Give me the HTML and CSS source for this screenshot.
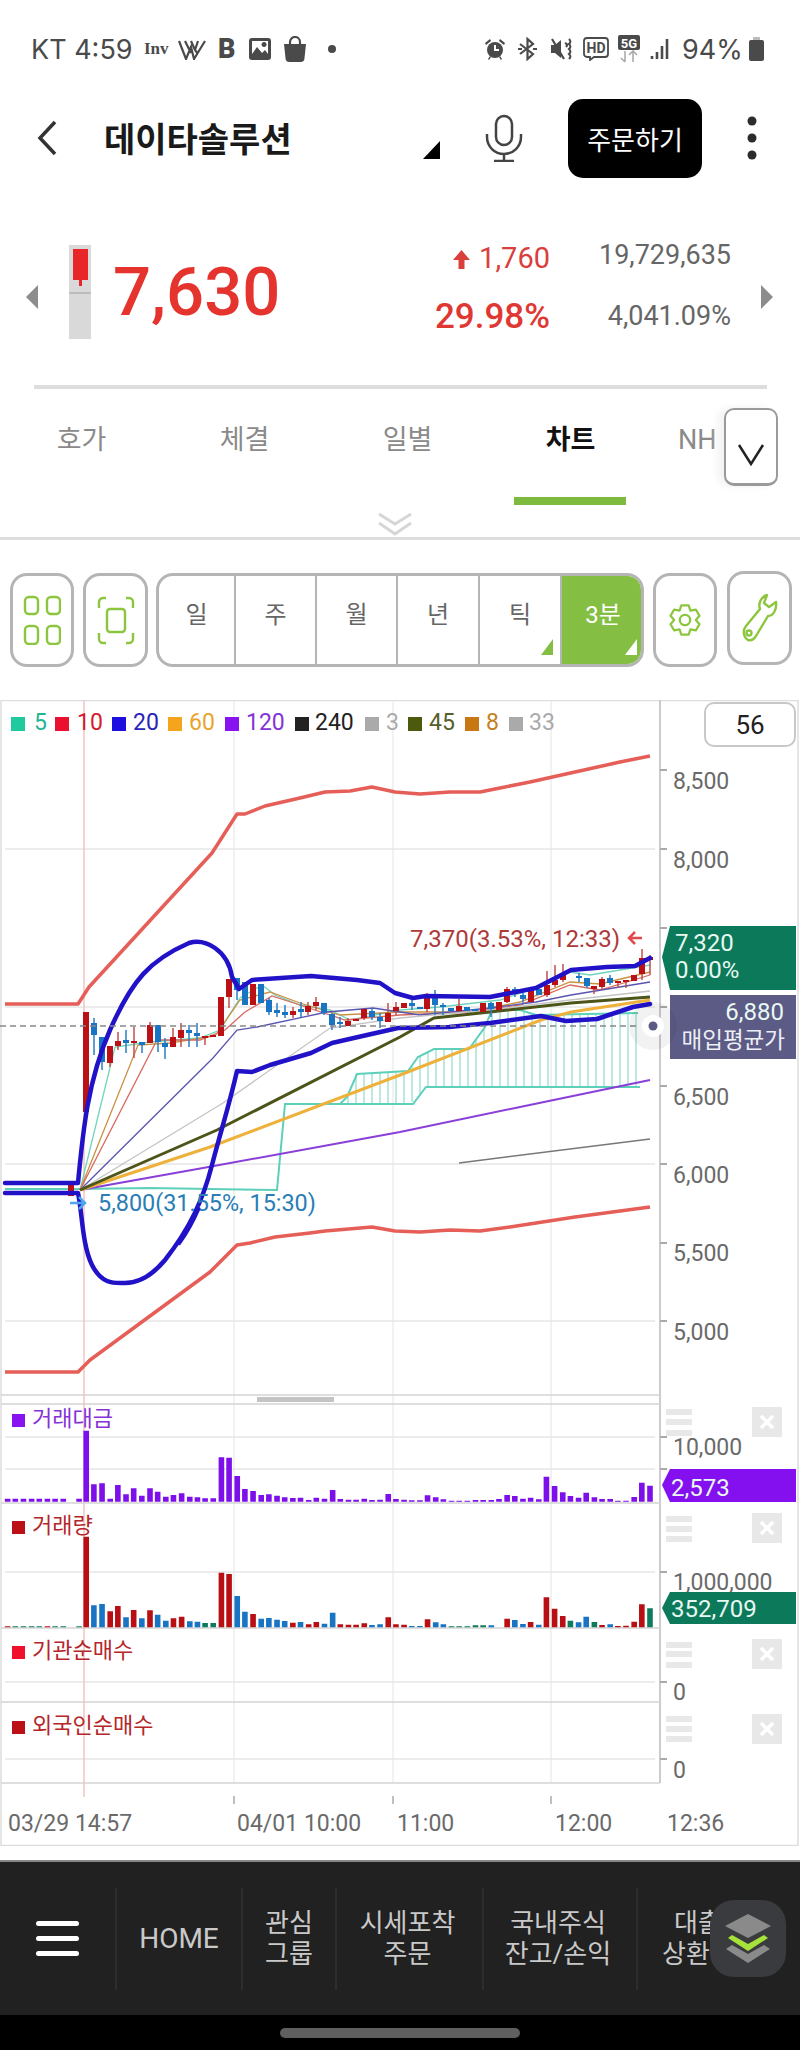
FILE: index.html
```html
<!DOCTYPE html>
<html lang="ko">
<head>
<meta charset="utf-8">
<title>데이타솔루션 차트</title>
<link rel="stylesheet" href="styles.css">
</head>
<body>
<div class="status">
  <span class="carrier">KT 4:59</span>
  <span class="st-inv">Inv</span>
  <svg class="ico st-w" width="28" height="22" viewBox="0 0 28 22"><path class="st-line" d="M1 3l7 18 5-12 3 12 11-18M7 3l6 12M13 3l4 9 3 4M20 3l-3 9"/></svg>
  <span class="st-b">B</span>
  <svg class="ico st-img" width="22" height="22" viewBox="0 0 22 22"><rect class="st-fill" width="22" height="22" rx="3"/><rect class="st-white" x="3" y="3" width="16" height="16"/><path class="st-fill" d="M3 19v-3l5-7 5 6 3-3 3 4v3zM15 4a2.500 2.500 0 1 0 .1 0z"/></svg>
  <svg class="ico st-bag" width="24" height="26" viewBox="0 0 24 26"><path class="st-fill" d="M1 8h22l-1.500 14a4 4 0 0 1-4 4H6.500a4 4 0 0 1-4-4z"/><path class="st-line" d="M7 9V6a5 5 0 0 1 10 0v3"/></svg>
  <svg class="ico st-dot" width="8" height="8" viewBox="0 0 8 8"><circle class="st-fill" cx="4" cy="4" r="4"/></svg>
  <svg class="ico st-alarm" width="20" height="22" viewBox="0 0 20 22"><circle class="st-fill" cx="10" cy="12" r="8"/><path class="st-fill" d="M0 5l5-4 1 2-5 4zM20 5l-5-4-1 2 5 4zM3 21l2-3 1 1-2 3zM17 21l-2-3-1 1 2 3z"/><path class="st-white-line" d="M10 7v5h4"/></svg>
  <svg class="ico st-bt" width="19" height="24" viewBox="0 0 19 24"><path class="st-line" d="M2 7l13 10-5.500 5V2L15 7 2 17"/><path class="st-line" d="M0 12h4M15 12h4"/></svg>
  <svg class="ico st-mute" width="21" height="24" viewBox="0 0 21 24"><path class="st-fill" d="M0 8h4l6-5v18l-6-5H0z"/><path class="st-line" d="M1 2l12 20M14 6c2 1 3 2 1 4M18 2c2 2 2 3 0 5 2 2 2 3 0 5 2 2 2 3 0 5 2 2 2 3 0 5"/></svg>
  <svg class="ico st-hd-i" width="26" height="24" viewBox="0 0 26 24"><path class="st-line-th" d="M4 1h18a3 3 0 0 1 3 3v13a3 3 0 0 1-3 3H11l-4 3v-3H4a3 3 0 0 1-3-3V4a3 3 0 0 1 3-3z"/><text class="st-hd" x="13" y="16">HD</text></svg>
  <svg class="ico st-5g-i" width="22" height="28" viewBox="0 0 22 28"><rect class="st-fill" width="22" height="15" rx="2"/><text class="st-5g" x="11" y="12.500">5G</text><path class="st-thin" d="M7 16v11M3 23l4 4M15 27V16M11 20l4-4 4 4"/></svg>
  <svg class="ico st-sig-i" width="20" height="20" viewBox="0 0 20 20"><path class="st-sig" d="M2 20v-3M7 20v-7M12 20V7M17 20V0"/></svg>
  <span class="batt-text">94%</span>
  <svg class="ico st-batt" width="15" height="24" viewBox="0 0 15 24"><path class="st-cap" d="M4 0h7v3H4z"/><rect class="st-fill" y="3" width="15" height="21" rx="2"/></svg>
</div>

<header class="header">
  <svg class="back" width="20" height="36" viewBox="0 0 20 36"><path d="M18 2L3 18l15 16"/></svg>
  <h1 class="title">데이타솔루션</h1>
  <span class="title-tri"></span>
  <svg class="mic" width="38" height="48" viewBox="0 0 38 48"><rect x="11" y="2" width="16" height="29" rx="8"/><path d="M2 20v3a17 17 0 0 0 34 0v-3M19 40v7M9 47h20"/></svg>
  <button class="order">주문하기</button>
  <svg class="more" width="10" height="44" viewBox="0 0 10 44"><circle cx="5" cy="5" r="4.500"/><circle cx="5" cy="22" r="4.500"/><circle cx="5" cy="39" r="4.500"/></svg>
</header>

<section class="quote">
  <span class="arrow-left"></span>
  <div class="mini-candle"><span class="mini-body"></span><span class="mini-wick"></span><span class="mini-base"></span></div>
  <div class="price">7,630</div>
  <div class="stats">
    <div class="chg"><svg class="up-arrow" width="19" height="20" viewBox="0 0 19 20"><path d="M9.500 1L18 11h-5.500v9h-6v-9H1z"/></svg>1,760</div>
    <div class="vol">19,729,635</div>
    <div class="pct">29.98%</div>
    <div class="vol">4,041.09%</div>
  </div>
  <span class="arrow-right"></span>
</section>
<div class="sep"></div>

<nav class="tabs">
  <div class="tab">호가</div>
  <div class="tab">체결</div>
  <div class="tab">일별</div>
  <div class="tab active">차트</div>
  <div class="tab last">NH</div>
  <div class="tabs-more"><svg width="28" height="23" viewBox="0 0 28 23"><path d="M2 2l12 19L26 2"/></svg></div>
</nav>
<div class="collapse">
  <svg width="36" height="24" viewBox="0 0 36 24"><path d="M2 2l16 10L34 2M2 11l16 11 16-11"/></svg>
</div>

<div class="toolbar">
  <button class="tool w64"><svg width="38" height="50" viewBox="0 0 38 50"><rect x="2" y="2" width="13" height="17" rx="4"/><rect x="24" y="2" width="13" height="17" rx="4"/><rect x="2" y="31" width="13" height="18" rx="4"/><rect x="24" y="31" width="13" height="18" rx="4"/></svg></button>
  <button class="tool w65"><svg width="38" height="50" viewBox="0 0 38 50"><path d="M9 3H6A4 4 0 0 0 2 7v6M29 3h3a4 4 0 0 1 4 4v6M2 38v6a4 4 0 0 0 4 4h3M36 38v6a4 4 0 0 1-4 4h-3"/><rect x="10" y="14" width="18" height="23" rx="3"/></svg></button>
  <div class="segments">
    <div class="seg s77">일</div>
    <div class="seg s81">주</div>
    <div class="seg s81">월</div>
    <div class="seg s82">년</div>
    <div class="seg s82 tick">틱</div>
    <div class="seg on tick">3분</div>
  </div>
  <button class="tool w64"><svg width="32" height="32" viewBox="0 0 34 34"><path d="M13.100 1.500H20.900L22.750 7 28.500 5.900 32.400 12.600 28.500 17 32.400 21.400 28.500 28.100 22.750 27 20.900 32.500H13.100L11.250 27 5.500 28.100 1.600 21.400 5.500 17 1.600 12.600 5.500 5.900 11.250 7Z"/><circle cx="17" cy="17" r="5.500"/></svg></button>
  <button class="tool w65 raised"><svg width="36" height="50" viewBox="0 0 36 50"><path d="M25 2C19 4 16 10 18 16L4 33C0 38 2 45 6 47 9 48 12 46 14 43L26 23C31 23 35 17 34 9L27 14 22 10Z"/><circle cx="7" cy="40" r="2.500"/></svg></button>
</div>

<div class="chart-wrap">
<svg class="chart" width="800" height="1146" viewBox="0 700 800 1146">
  <rect class="frame" x="1" y="700.500" width="797" height="1145"/>
  <path class="vgrid" d="M234 700V1783M393 700V1783M551 700V1783"/>
  <path class="hgrid" d="M5 849H655M5 1007H655M5 1164H655M5 1321H655M5 1437H655M5 1469H655M5 1572H655M5 1682H655M5 1759H655"/>
  <path class="axis" d="M660 700V1783"/>
  <path class="panel-line" d="M1 1395H660M1 1404H660M1 1503H660M1 1628H660M1 1702H660M1 1783H660"/>
  <path class="tick-mark" d="M660 770h7M660 849h7M660 928h7M660 1007h7M660 1086h7M660 1164h7M660 1243h7M660 1321h7M660 1437h7M660 1469h7M660 1572h7M660 1682h7M660 1759h7"/>
  <path class="vred" d="M84 700V1797"/>
  <path class="xtick" d="M234 1796v8M393 1796v8M551 1796v8"/>
  <rect class="scroller" x="257" y="1397" width="77" height="5"/>

  <path class="hatch" d="M348 1094V1104M356 1074V1104M364 1073V1104M372 1073V1104M380 1072V1104M388 1072V1104M396 1071V1104M404 1071V1104M412 1067V1102M420 1055V1094M428 1051V1087M436 1049V1087M444 1049V1087M452 1049V1087M460 1049V1087M468 1049V1087M476 1040V1087M484 1028V1087M492 1010V1087M500 1010V1087M508 1010V1087M516 1010V1087M524 1011V1087M532 1014V1087M540 1015V1087M548 1015V1087M556 1015V1087M564 1015V1087M572 1015V1087M580 1014V1087M588 1014V1087M596 1014V1087M604 1014V1087M612 1014V1087M620 1014V1087M628 1014V1087M636 1014V1087"/>
  <path class="span" d="M5 1189H78L150 1188 277 1190 285 1104H413L426 1087H640"/>
  <path class="span" d="M340 1104L347 1097 357 1074 408 1071 418 1057 434 1049H469L485 1027 492 1010H520L536 1015 638 1013"/>

  <path class="ma-thin teal" d="M80 1190L115 1047 150 1042 200 1038 220 1030 240 998 262 985 275 995 300 1005 330 1010 350 1020 400 1010 440 1007 500 1000 545 985 570 972 590 975 650 965"/>
  <path class="ma-thin brown" d="M80 1190L138 1045 170 1043 215 1036 240 1000 270 992 300 1003 340 1015 400 1012 470 1012 520 1002 570 982 600 984 650 972"/>
  <path class="ma-thin red" d="M80 1190L157 1040 200 1040 225 1030 245 1012 272 996 300 1005 345 1020 400 1015 470 1012 520 1005 570 985 600 990 650 975"/>
  <path class="ma-thin navy" d="M80 1190L213 1058 237 1030 257 1027 327 1012 373 1008 420 1015 490 1008 536 1002 571 995 650 982"/>
  <path class="ma-thin grey" d="M80 1190L223 1103 330 1028 400 1018 490 1010 570 1000 650 991"/>
  <path class="ma-120" d="M80 1190L203 1168 400 1132 520 1107 650 1080"/>
  <path class="ma-60" d="M80 1190L210 1147 400 1075 541 1020 571 1012 650 1000"/>
  <path class="ma-45" d="M80 1190L217 1130 400 1037 434 1018 490 1012 571 1003 650 997"/>
  <path class="ma-240" d="M459 1163L650 1139"/>

  <path class="wick-b" d="M94 1018V1055M102 1037V1070M126 1030V1053M142 1042V1053M158 1025V1052M165 1038V1059M189 1025V1047M197 1023V1047M237 978V1000M269 998V1015M277 1003V1017M285 1005V1018M301 1002V1017M324 1003V1015M332 1013V1030M340 1017V1028M372 1008V1020M380 1013V1028M412 1000V1010M435 990V1015M443 1003V1015M491 1002V1017M515 987V997M523 993V1003M579 973V982M587 978V988M610 975V985"/>
  <path class="wick-r" d="M110 1046V1067M118 1032V1050M134 1027V1058M150 1022V1043M173 1028V1047M181 1023V1047M205 1036V1045M229 979V1008M253 984V1005M293 1007V1018M308 1002V1015M316 997V1010M348 1018V1026M364 1009V1020M388 1003V1022M396 1002V1015M427 993V1012M459 999V1012M507 987V1003M547 971V997M555 965V987M563 964V982M594 986V994M602 977V990M618 981V988M626 980V988M642 949V980M650 955V975"/>
  <path class="body-r" d="M86 1012V1112M110 1046V1063M118 1041V1046M134 1041V1043M150 1025V1043M173 1037V1047M181 1030V1038M205 1036V1038M213 1035V1037M221 997V1036M229 979V997M253 984V1005M293 1011V1015M308 1006V1012M316 1002V1006M348 1021V1026M356 1019V1021M364 1009V1018M388 1013V1022M396 1007V1011M404 1003V1008M427 997V1009M459 1006V1011M483 1003V1012M499 1002V1010M507 989V1002M531 989V1002M547 985V995M555 980V985M563 975V980M594 986V989M602 979V987M618 981V983M626 980V982M634 975V981M642 958V974M650 957V960"/>
  <path class="body-b" d="M94 1023V1035M102 1037V1062M126 1040V1043M142 1042V1045M158 1025V1042M165 1043V1047M189 1030V1033M197 1033V1036M237 978V990M245 982V1005M261 984V1003M269 1000V1012M277 1010V1013M285 1012V1015M301 1009V1012M324 1003V1013M332 1014V1025M340 1022V1024M372 1011V1017M380 1017V1021M412 1003V1006M420 1007V1009M435 995V1005M443 1005V1007M451 1008V1011M467 1007V1011M475 1009V1011M491 1003V1009M515 989V994M523 995V999M539 989V995M571 969V972M579 976V978M587 978V986M610 978V983"/>
  <path class="body-r" d="M71 1184V1196"/>

  <path class="env" d="M5 1004H78L89 987 212 853 237 814 245 814 265 806 300 798 325 792 350 791 372 787 395 792 420 794 450 792 480 792 500 788 530 782 575 772 620 762 650 756"/>
  <path class="env" d="M5 1372H78L90 1360 210 1272 237 1245 250 1243 275 1237 310 1233 325 1231 372 1227 395 1231 420 1232 450 1230 480 1231 510 1227 575 1217 620 1211 650 1207"/>
  <path class="boll" d="M5 1183H78C83 1130 88 1080 110 1030S150 960 189 943C205 938 228 950 232 977L239 989 252 980 311 976 357 980 380 983 395 993 413 998 426 996 490 997 536 988 571 970 607 967 635 966 650 958"/>
  <path class="boll" d="M5 1193H78C82 1210 82 1245 92 1265S115 1283 125 1283 150 1278 165 1260C190 1228 203 1200 212 1165S228 1110 237 1071L252 1072 270 1065 311 1053 332 1043 367 1035 398 1028 449 1027 490 1023 541 1016 566 1021 597 1019 633 1007 650 1004"/>
  <path class="dash" d="M0 1026H640"/>

  <g>
    <rect class="f-teal" x="11" y="717" width="14" height="14"/><text class="lg c-teal" x="34" y="730">5</text>
    <rect class="f-red" x="55" y="717" width="14" height="14"/><text class="lg c-red" x="77" y="730">10</text>
    <rect class="f-blue" x="112" y="717" width="14" height="14"/><text class="lg c-blue" x="133" y="730">20</text>
    <rect class="f-orange" x="168" y="717" width="14" height="14"/><text class="lg c-orange" x="189" y="730">60</text>
    <rect class="f-purple" x="225" y="717" width="14" height="14"/><text class="lg c-purple" x="246" y="730">120</text>
    <rect class="f-black" x="295" y="717" width="14" height="14"/><text class="lg c-black" x="315" y="730">240</text>
    <rect class="f-grey" x="365" y="717" width="14" height="14"/><text class="lg c-grey" x="386" y="730">3</text>
    <rect class="f-olive" x="408" y="717" width="14" height="14"/><text class="lg c-olive" x="429" y="730">45</text>
    <rect class="f-brown" x="465" y="717" width="14" height="14"/><text class="lg c-brown" x="486" y="730">8</text>
    <rect class="f-grey" x="509" y="717" width="14" height="14"/><text class="lg c-grey" x="529" y="730">33</text>
  </g>
  <rect class="count-box" x="705" y="703" width="90" height="43" rx="9"/>
  <text class="count" x="750" y="734">56</text>

  <text class="yl" x="673" y="789">8,500</text>
  <text class="yl" x="673" y="868">8,000</text>
  <text class="yl" x="673" y="1105">6,500</text>
  <text class="yl" x="673" y="1183">6,000</text>
  <text class="yl" x="673" y="1261">5,500</text>
  <text class="yl" x="673" y="1340">5,000</text>
  <text class="yl" x="673" y="1455">10,000</text>
  <text class="yl" x="673" y="1590">1,000,000</text>
  <text class="yl" x="673" y="1700">0</text>
  <text class="yl" x="673" y="1778">0</text>
  <text class="yl" x="8" y="1831">03/29 14:57</text>
  <text class="yl" x="237" y="1831">04/01 10:00</text>
  <text class="yl" x="397" y="1831">11:00</text>
  <text class="yl" x="555" y="1831">12:00</text>
  <text class="yl" x="667" y="1831">12:36</text>

  <text class="note-hi" x="410" y="947">7,370(3.53%, 12:33)</text>
  <path class="note-arrow-r" d="M642 938H629M635 932l-6 6 6 6"/>
  <text class="note-lo" x="98" y="1211">5,800(31.55%, 15:30)</text>
  <path class="boll" d="M179 1243C186 1233 192 1223 198 1209"/>
  <path class="note-arrow-b" d="M70 1203H85M79 1197l6 6-6 6"/>

  <path class="b-green" d="M670 926H796V990H670L662 957z"/>
  <text class="bt" x="675" y="951">7,320</text>
  <text class="bt" x="675" y="978">0.00%</text>
  <rect class="b-slate" x="670" y="995" width="126" height="64"/>
  <text class="bt end" x="784" y="1020">6,880</text>
  <text class="bt-k end" x="785" y="1048">매입평균가</text>
  <circle class="halo" cx="653" cy="1026" r="24"/>
  <circle class="halo-in" cx="653" cy="1026" r="11"/>
  <circle class="halo-dot" cx="653" cy="1026" r="4.500"/>

  <g transform="translate(0 1390) scale(.5102 .3333)">
    <path class="bar b-pur" d="M15 335V326M30 335V326M46 335V326M62 335V326M77 335V326M93 335V326M108 335V326M124 335V326M155 335V326M169 335V122M184 335V283M200 335V280M216 335V326M231 335V285M247 335V313M262 335V295M278 335V317M294 335V295M309 335V305M325 335V320M340 335V315M356 335V310M372 335V320M387 335V322M402 335V325M418 335V325M434 335V202M449 335V203M465 335V258M480 335V297M496 335V303M512 335V315M527 335V313M543 335V317M558 335V322M574 335V324M589 335V323M605 335V330M620 335V323M636 335V326M652 335V300M667 335V327M683 335V329M698 335V329M714 335V326M729 335V330M745 335V329M761 335V312M776 335V327M792 335V329M807 335V331M823 335V331M838 335V316M854 335V322M869 335V328M885 335V332M900 335V332M916 335V332M932 335V330M947 335V330M963 335V330M978 335V327M994 335V315M1009 335V318M1025 335V326M1040 335V323M1056 335V328M1071 335V260M1087 335V288M1103 335V307M1118 335V318M1134 335V323M1149 335V308M1165 335V322M1180 335V327M1196 335V327M1211 335V332M1227 335V332M1243 335V321M1258 335V278M1274 335V287"/>
    <path class="bar b-red" d="M169 712V440M216 712V664M231 712V648M262 712V660M294 712V661M340 712V685M356 712V680M434 712V548M449 712V552M496 712V672M574 712V698M605 712V703M620 712V696M667 712V703M683 712V704M698 712V704M714 712V700M761 712V682M776 712V703M792 712V704M838 712V688M994 712V686M1040 712V696M1071 712V622M1087 712V656M1103 712V678M1180 712V705M1211 712V708M1227 712V707M1243 712V695M1258 712V643M15 712V709M93 712V709"/>
    <path class="bar b-blu" d="M184 712V646M200 712V642M247 712V682M278 712V685M309 712V674M325 712V692M372 712V694M387 712V695M465 712V618M480 712V665M512 712V686M527 712V684M543 712V689M558 712V693M589 712V696M636 712V701M652 712V668M729 712V705M745 712V703M807 712V708M823 712V708M854 712V697M869 712V703M963 712V706M1009 712V690M1025 712V702M1056 712V704M1134 712V697M1149 712V680M1196 712V703"/>
    <path class="bar b-grn" d="M30 712V709M46 712V709M62 712V709M77 712V709M108 712V709M124 712V709M155 712V709M402 712V699M418 712V699M885 712V709M900 712V709M916 712V709M932 712V706M947 712V706M1118 712V692M1165 712V696M1274 712V655"/>
  </g>
  <path class="b-pur-fill" d="M670 1469H796V1502H670L662 1485z"/>
  <text class="bt" x="671" y="1496">2,573</text>
  <path class="b-green" d="M670 1592H796V1624H670L662 1608z"/>
  <text class="bt" x="671" y="1617">352,709</text>

  <rect class="f-purple" x="12" y="1414" width="13" height="13"/><text class="pl c-purple" x="32" y="1426">거래대금</text>
  <rect class="f-dred" x="12" y="1521" width="13" height="13"/><text class="pl c-dred" x="32" y="1533">거래량</text>
  <rect class="f-red2" x="12" y="1646" width="13" height="13"/><text class="pl c-dred" x="32" y="1658">기관순매수</text>
  <rect class="f-dred" x="12" y="1721" width="13" height="13"/><text class="pl c-dred" x="32" y="1733">외국인순매수</text>

  <g class="handle">
    <rect x="666" y="1409" width="26" height="6"/><rect x="666" y="1419" width="26" height="6"/><rect x="666" y="1430" width="26" height="6"/>
    <rect x="666" y="1516" width="26" height="6"/><rect x="666" y="1526" width="26" height="6"/><rect x="666" y="1536" width="26" height="6"/>
    <rect x="666" y="1642" width="26" height="6"/><rect x="666" y="1651" width="26" height="6"/><rect x="666" y="1662" width="26" height="6"/>
    <rect x="666" y="1716" width="26" height="6"/><rect x="666" y="1726" width="26" height="6"/><rect x="666" y="1736" width="26" height="6"/>
    <rect x="752" y="1407" width="30" height="30"/><rect x="752" y="1513" width="30" height="30"/><rect x="752" y="1639" width="30" height="30"/><rect x="752" y="1714" width="30" height="30"/>
  </g>
  <path class="close-x" d="M761 1416l12 12M773 1416l-12 12M761 1522l12 12M773 1522l-12 12M761 1648l12 12M773 1648l-12 12M761 1723l12 12M773 1723l-12 12"/>
</svg>
</div>

<footer class="nav">
  <div class="nav-menu"><span></span><span></span><span></span></div>
  <div class="nav-item w-home">HOME</div>
  <div class="nav-item w-fav">관심<br>그룹</div>
  <div class="nav-item w-price">시세포착<br>주문</div>
  <div class="nav-item w-stock">국내주식<br>잔고/손익</div>
  <div class="nav-item w-loan">대출<br>상환액</div>
  <div class="fab"><svg width="48" height="52" viewBox="0 0 48 52"><path class="fab-g" d="M24 1L47 13 24 25 1 13z"/><path class="fab-g" d="M2 36l6-4 16 9 16-9 6 4-22 14z"/><path class="fab-l" d="M4 25l4-3 16 9 16-9 4 3-20 13z"/></svg></div>
</footer>
<div class="home-bar"><span></span></div>
</body>
</html>
```

FILE: styles.css
```css
* { box-sizing: border-box; }
html, body { margin: 0; padding: 0; }
body {
  width: 800px;
  height: 2050px;
  background: #fff;
  overflow: hidden;
  font-family: Roboto, "Noto Sans CJK KR", sans-serif;
  color: #333;
}

/* status bar */
.status {
  height: 98px;
  padding-left: 31px;
  display: flex;
  align-items: center;
  color: #4a4a4a;
}
.carrier { font-family: Inter, sans-serif; font-size: 27px; width: 103px; white-space: nowrap; }
.st-inv { font-family: "Liberation Serif", serif; font-size: 17px; font-weight: 700; width: 26px; margin-left: 10px; }
.st-w { margin-left: 8px; }
.st-b { font-size: 27px; font-weight: 900; width: 18px; margin-left: 12px; }
.st-img { margin-left: 13px; }
.st-bag { margin-left: 12px; }
.st-dot { margin-left: 21px; margin-right: 149px; }
.st-alarm { margin-left: 0; }
.st-bt { margin-left: 13px; }
.st-mute { margin-left: 14px; }
.st-hd-i { margin-left: 11px; }
.st-5g-i { margin-left: 9px; }
.st-sig-i { margin-left: 10px; }
.batt-text { font-family: Inter, sans-serif; font-size: 27px; width: 60px; margin-left: 12px; white-space: nowrap; }
.st-batt { margin-left: 7px; }
.ico { display: block; flex: none; }
.st-fill { fill: #4a4a4a; }
.st-cap { fill: #bbb; }
.st-white { fill: #fff; }
.st-line { fill: none; stroke: #4a4a4a; stroke-width: 2.200; }
.st-line-th { fill: none; stroke: #4a4a4a; stroke-width: 1.800; }
.st-white-line { fill: none; stroke: #fff; stroke-width: 2; }
.st-thin { fill: none; stroke: #aaa; stroke-width: 1.600; }
.st-sig { fill: none; stroke: #4a4a4a; stroke-width: 2.600; }
.st-hd { font-size: 14px; font-weight: 700; fill: #4a4a4a; text-anchor: middle; }
.st-5g { font-size: 13px; font-weight: 700; fill: #fff; text-anchor: middle; }

/* header */
.header { height: 80px; display: flex; align-items: center; padding-left: 37px; }
.back { fill: none; stroke: #333; stroke-width: 3.500; flex: none; }
.title {
  margin: 0 0 0 47px;
  width: 319px;
  font-size: 34px;
  line-height: 44px;
  font-weight: 700;
  color: #1a1a1a;
  padding-top: 4px;
}
.title-tri {
  width: 17px;
  height: 18px;
  margin-top: 24px;
  background: #000;
  clip-path: polygon(100% 0, 100% 100%, 0 100%);
  flex: none;
}
.mic { margin-left: 45px; fill: none; stroke: #444; stroke-width: 2.500; flex: none; }
.order {
  margin-left: 45px;
  width: 134px;
  height: 79px;
  border: 0;
  border-radius: 15px;
  background: #000;
  color: #fff;
  font-family: inherit;
  font-size: 26px;
  padding: 0;
}
.more { margin-left: 45px; fill: #2b2b2b; flex: none; }

/* quote */
.quote {
  height: 94px;
  margin-top: 67px;
  margin-bottom: 46px;
  padding-left: 26px;
  display: flex;
  align-items: center;
}
.arrow-left, .arrow-right { width: 12px; height: 24px; background: #8c8c8c; flex: none; }
.arrow-left { clip-path: polygon(100% 0, 100% 100%, 0 50%); margin-top: 10px; }
.arrow-right { clip-path: polygon(0 0, 100% 50%, 0 100%); margin-left: 30px; margin-top: 10px; }
.mini-candle {
  position: relative;
  width: 22px;
  height: 94px;
  margin-left: 31px;
  background: #d9d9d9;
  flex: none;
}
.mini-body { position: absolute; left: 4px; top: 4px; width: 15px; height: 31px; background: #e8262a; }
.mini-wick { position: absolute; left: 10px; top: 35px; width: 3px; height: 6px; background: #e8262a; }
.mini-base { position: absolute; left: 0; top: 47px; width: 22px; height: 2px; background: #bbb; }
.price {
  margin-left: 22px;
  width: 321px;
  font-size: 67px;
  line-height: 90px;
  font-weight: 500;
  color: #e5332e;
}
.stats {
  display: grid;
  grid-template-columns: 116px 181px;
  grid-template-rows: 47px 47px;
  row-gap: 14px;
  text-align: right;
  margin-top: -13px;
}
.chg { font-size: 29px; line-height: 47px; margin-top: 3px; color: #d9403c; white-space: nowrap; }
.up-arrow { fill: #d9403c; margin-right: 8px; vertical-align: -1px; }
.pct { font-size: 35px; line-height: 47px; font-weight: 500; color: #df3833; white-space: nowrap; }
.vol { font-size: 27px; line-height: 47px; color: #666; white-space: nowrap; }
.sep { height: 4px; margin: 0 33px 0 34px; background: #ddd; }

/* tabs */
.tabs {
  position: relative;
  height: 116px;
  display: grid;
  grid-template-columns: repeat(4, 163px) 148px;
  overflow: hidden;
}
.tab {
  position: relative;
  padding-top: 32px;
  text-align: center;
  font-size: 27px;
  line-height: 38px;
  color: #8a8a8a;
}
.tab.last { text-align: left; padding-left: 26px; }
.tab.active { color: #111; font-weight: 700; }
.tab.active::after {
  content: "";
  position: absolute;
  left: 25px;
  right: 26px;
  bottom: 0;
  height: 8px;
  background: #7dbb3f;
}
.tabs-more {
  position: absolute;
  top: 19px;
  left: 724px;
  width: 54px;
  height: 78px;
  border: 2px solid #9a9a9a;
  border-bottom-width: 3px;
  border-radius: 10px;
  background: #fff;
  box-shadow: -6px 0 8px #f2f2f2;
  display: flex;
  align-items: center;
  justify-content: center;
  padding-top: 16px;
}
.tabs-more svg { fill: none; stroke: #222; stroke-width: 2.500; }

.collapse {
  height: 35px;
  border-bottom: 3px solid #ddd;
  padding-top: 7px;
  padding-right: 11px;
  display: flex;
  justify-content: center;
}
.collapse svg { fill: none; stroke: #d6d6d6; stroke-width: 3; }

/* toolbar */
.toolbar {
  height: 160px;
  padding: 33px 0 0 10px;
  display: flex;
  align-items: flex-start;
  gap: 9px;
}
.tool {
  height: 94px;
  padding: 0;
  background: #fff;
  border: 3px solid #b5b5b5;
  border-radius: 17px;
  display: flex;
  align-items: center;
  justify-content: center;
}
.w64 { width: 64px; }
.w65 { width: 65px; }
.raised { margin-top: -2px; margin-left: 1px; }
.tool svg { fill: none; stroke: #8cc63f; stroke-width: 2.400; stroke-linejoin: round; }
.segments {
  width: 488px;
  height: 94px;
  margin-left: -1px;
  display: flex;
  border: 3px solid #b5b5b5;
  border-radius: 17px;
  overflow: hidden;
}
.seg {
  position: relative;
  flex: none;
  border-right: 2px solid #b5b5b5;
  padding-top: 22px;
  text-align: center;
  font-size: 24px;
  line-height: 34px;
  color: #666;
}
.s77 { width: 77px; }
.s81 { width: 81px; }
.s82 { width: 82px; }
.seg.on {
  flex: 1 1 0;
  background: #84bf44;
  color: #fff;
  border-right: 0;
  margin: -3px -3px -3px 0;
  padding-top: 25px;
}
.seg.tick::after {
  content: "";
  position: absolute;
  right: 7px;
  bottom: 9px;
  width: 12px;
  height: 16px;
  background: #84bf44;
  clip-path: polygon(100% 0, 100% 100%, 0 100%);
}
.seg.on.tick::after { background: #fff; bottom: 12px; }

/* chart */
.chart-wrap { height: 1146px; }
.chart { display: block; }
.frame { fill: none; stroke: #ddd; stroke-width: 1.500; }
.vgrid { stroke: #e4e4e4; stroke-width: 1; fill: none; }
.hgrid { stroke: #e6e6e6; stroke-width: 1.500; fill: none; }
.axis { stroke: #ccc; stroke-width: 2; fill: none; }
.panel-line { stroke: #d4d4d4; stroke-width: 1.500; fill: none; }
.tick-mark { stroke: #aaa; stroke-width: 2; fill: none; }
.vred { stroke: #f1c4c2; stroke-width: 1.500; fill: none; }
.xtick { stroke: #aaa; stroke-width: 1.500; fill: none; }
.scroller { fill: #c4c4c4; }

.hatch { stroke: #a8e2d6; stroke-width: 1.500; fill: none; }
.span { stroke: #5ed0ba; stroke-width: 2; fill: none; }
.ma-thin { fill: none; stroke-width: 1.300; }
.teal { stroke: #6fd4bd; }
.brown { stroke: #c9913f; }
.red { stroke: #d96a5f; }
.navy { stroke: #5a55b0; }
.grey { stroke: #c4c4c4; }
.ma-120 { fill: none; stroke: #8b3fd9; stroke-width: 2; }
.ma-60 { fill: none; stroke: #eeb13b; stroke-width: 3; }
.ma-45 { fill: none; stroke: #4d5419; stroke-width: 3; }
.ma-240 { fill: none; stroke: #777; stroke-width: 1.500; }

.wick-b { stroke: #2b7fc4; stroke-width: 1.500; fill: none; }
.wick-r { stroke: #c0504d; stroke-width: 1.500; fill: none; }
.body-r { stroke: #bb1016; stroke-width: 6; fill: none; }
.body-b { stroke: #1a74c4; stroke-width: 6; fill: none; }
.env { fill: none; stroke: #e55e58; stroke-width: 3.500; stroke-linejoin: round; }
.boll { fill: none; stroke: #2112c8; stroke-width: 4.500; stroke-linejoin: round; stroke-linecap: round; }
.dash { stroke: #888; stroke-width: 1.500; stroke-dasharray: 6 4; fill: none; }

.lg { font-size: 23px; }
.f-teal { fill: #1fca9e; } .c-teal { fill: #1fb595; }
.f-red { fill: #ec1030; } .c-red { fill: #d41b2d; }
.f-blue { fill: #1c0fe0; } .c-blue { fill: #2a22b8; }
.f-orange { fill: #f5a51d; } .c-orange { fill: #e8a52e; }
.f-purple { fill: #8714f0; } .c-purple { fill: #8533d6; }
.f-black { fill: #222; } .c-black { fill: #222; }
.f-grey { fill: #aaa; } .c-grey { fill: #aaa; }
.f-olive { fill: #4c5a0e; } .c-olive { fill: #55602a; }
.f-brown { fill: #c87812; } .c-brown { fill: #c4821f; }
.f-dred { fill: #bb1016; } .c-dred { fill: #b5262a; }
.f-red2 { fill: #f0102c; }

.count-box { fill: #fff; stroke: #c8c8c8; stroke-width: 2; }
.count { font-size: 26px; fill: #222; text-anchor: middle; }
.yl { font-size: 23px; fill: #6a6a6a; }
.note-hi { font-size: 24px; fill: #ad3a3a; }
.note-lo { font-size: 23.400px; fill: #2a7db5; }
.note-arrow-r { fill: none; stroke: #e04a4a; stroke-width: 2.500; }
.note-arrow-b { fill: none; stroke: #4da6ee; stroke-width: 2.500; }

.b-green { fill: #0c7a5a; }
.b-slate { fill: #5b5b86; }
.b-pur-fill { fill: #8510ef; }
.bt { font-size: 24px; fill: #e8f8f2; }
.bt-k { font-size: 22.500px; fill: #eeeef5; }
.end { text-anchor: end; }
.halo { fill: #000; fill-opacity: .05; }
.halo-in { fill: #fff; }
.halo-dot { fill: #5b5b86; }

.bar { fill: none; stroke-width: 11; }
.b-pur { stroke: #7d10ea; }
.b-red { stroke: #b80f14; }
.b-blu { stroke: #1a74c4; }
.b-grn { stroke: #0f7b5c; }
.pl { font-size: 22px; }
.handle rect { fill: #e8e8e8; }
.close-x { fill: none; stroke: #fff; stroke-width: 3.500; }

/* bottom nav */
.nav {
  position: relative;
  height: 155px;
  margin-top: 14px;
  background: #212121;
  border-top: 2px solid #888;
  display: flex;
  align-items: center;
  overflow: hidden;
}
.nav-menu {
  width: 115px;
  padding-left: 36px;
  display: flex;
  flex-direction: column;
  gap: 10px;
}
.nav-menu span { display: block; width: 43px; height: 5px; border-radius: 3px; background: #fff; }
.nav-item {
  height: 102px;
  flex: none;
  border-left: 2px solid #2d2d2d;
  display: flex;
  align-items: center;
  justify-content: center;
  text-align: center;
  font-size: 26px;
  line-height: 31px;
  color: #c9c9c9;
}
.w-home { width: 126px; font-size: 28px; }
.w-fav { width: 94px; }
.w-price { width: 147px; padding-right: 4px; }
.w-stock { width: 154px; padding-right: 4px; }
.w-loan { width: 122px; }
.fab {
  position: absolute;
  left: 710px;
  top: 38px;
  width: 76px;
  height: 77px;
  border-radius: 24px;
  background: #3a3b3e;
  display: flex;
  align-items: center;
  justify-content: center;
}
.fab-g { fill: #8a8a8a; }
.fab-l { fill: #a6e33a; }

.home-bar { height: 35px; background: #000; display: flex; justify-content: center; padding-top: 13px; }
.home-bar span { width: 240px; height: 10px; border-radius: 5px; background: #5f5f5f; }
```
